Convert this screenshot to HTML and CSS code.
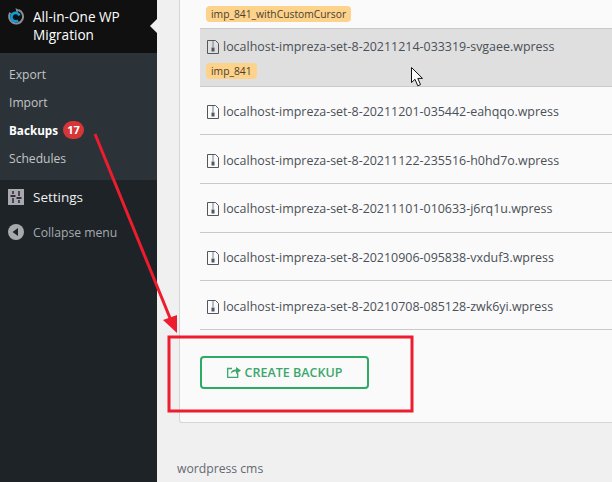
FILE: index.html
```html
<!DOCTYPE html>
<html lang="en">
<head>
  <meta charset="UTF-8" />
  <title>Backups</title>
  <link rel="stylesheet" href="styles.css">
</head>
<body>
  <!-- Sidebar -->
  <nav class="sidebar">
    <div class="plugin-head">
      <svg class="plugin-logo" width="18" height="18" viewBox="0 0 18 18">
        <path d="M11.5 2 A7 7 0 1 1 3.3 4.6" fill="none" stroke="#8c8f94" stroke-width="2"/>
        <path d="M8.5 0 L12.5 2.2 L9.5 4.5 Z" fill="#8c8f94"/>
        <path d="M12.5 7.5 A4.2 4.2 0 1 0 11 12.5" fill="none" stroke="#0a9fdc" stroke-width="2.6"/>
      </svg>
      <span class="plugin-name">All-in-One WP Migration</span>
      <span class="head-notch"></span>
    </div>
    <ul class="submenu">
      <li>Export</li>
      <li>Import</li>
      <li class="current">Backups <span class="count">17</span></li>
      <li>Schedules</li>
    </ul>
    <div class="menu-item">
      <svg class="menu-icon" width="16" height="16" viewBox="0 0 16 16">
        <rect width="16" height="16" fill="#a7aaad"/>
        <path d="M5 2v3M5 9v5M11 2v5M11 11v3" stroke="#3a2a44" stroke-width="1.6"/>
        <path d="M2.5 6h5v2h-5zM8.5 8h5v2h-5z" fill="#3a2a44"/>
      </svg>
      <span>Settings</span>
    </div>
    <div class="menu-item collapse">
      <svg class="menu-icon" width="16" height="16" viewBox="0 0 16 16">
        <circle cx="8" cy="8" r="8" fill="#a7aaad"/>
        <path d="M10 4v8L4.5 8z" fill="#1d2327"/>
      </svg>
      <span>Collapse menu</span>
    </div>
  </nav>

  <!-- Main -->
  <main class="main">
    <div class="card">
      <div class="row first">
        <span class="tag">imp_841_withCustomCursor</span>
      </div>
      <div class="row hover">
        <div class="file">
          <svg class="file-icon" width="12" height="14" viewBox="0 0 12 14"><path d="M.5.5h8l3 3v10H.5z" fill="none" stroke="#50575e"/><path d="M5 2h2M5 4h2M5 6h2" stroke="#7a7f85"/><rect x="4.5" y="7.5" width="3" height="4" fill="#50575e"/></svg>
          localhost-impreza-set-8-20211214-033319-svgaee.wpress
        </div>
        <span class="tag">imp_841</span>
      </div>
      <div class="row">
        <div class="file">
          <svg class="file-icon" width="12" height="14" viewBox="0 0 12 14"><path d="M.5.5h8l3 3v10H.5z" fill="none" stroke="#50575e"/><path d="M5 2h2M5 4h2M5 6h2" stroke="#7a7f85"/><rect x="4.5" y="7.5" width="3" height="4" fill="#50575e"/></svg>
          localhost-impreza-set-8-20211201-035442-eahqqo.wpress
        </div>
      </div>
      <div class="row">
        <div class="file">
          <svg class="file-icon" width="12" height="14" viewBox="0 0 12 14"><path d="M.5.5h8l3 3v10H.5z" fill="none" stroke="#50575e"/><path d="M5 2h2M5 4h2M5 6h2" stroke="#7a7f85"/><rect x="4.5" y="7.5" width="3" height="4" fill="#50575e"/></svg>
          localhost-impreza-set-8-20211122-235516-h0hd7o.wpress
        </div>
      </div>
      <div class="row">
        <div class="file">
          <svg class="file-icon" width="12" height="14" viewBox="0 0 12 14"><path d="M.5.5h8l3 3v10H.5z" fill="none" stroke="#50575e"/><path d="M5 2h2M5 4h2M5 6h2" stroke="#7a7f85"/><rect x="4.5" y="7.5" width="3" height="4" fill="#50575e"/></svg>
          localhost-impreza-set-8-20211101-010633-j6rq1u.wpress
        </div>
      </div>
      <div class="row">
        <div class="file">
          <svg class="file-icon" width="12" height="14" viewBox="0 0 12 14"><path d="M.5.5h8l3 3v10H.5z" fill="none" stroke="#50575e"/><path d="M5 2h2M5 4h2M5 6h2" stroke="#7a7f85"/><rect x="4.5" y="7.5" width="3" height="4" fill="#50575e"/></svg>
          localhost-impreza-set-8-20210906-095838-vxduf3.wpress
        </div>
      </div>
      <div class="row">
        <div class="file">
          <svg class="file-icon" width="12" height="14" viewBox="0 0 12 14"><path d="M.5.5h8l3 3v10H.5z" fill="none" stroke="#50575e"/><path d="M5 2h2M5 4h2M5 6h2" stroke="#7a7f85"/><rect x="4.5" y="7.5" width="3" height="4" fill="#50575e"/></svg>
          localhost-impreza-set-8-20210708-085128-zwk6yi.wpress
        </div>
      </div>
      <button class="create-btn">
        <svg width="14" height="12" viewBox="0 0 14 12"><path d="M5 2.5H.7v8.8h10V7" fill="none" stroke="#3aa76d" stroke-width="1.3"/><path d="M3.5 8C4 5 6 3.6 9 3.6V1L14 4.6 9 8V5.6C7 5.6 5 6 3.5 8z" fill="#3aa76d"/></svg>
        CREATE BACKUP
      </button>
    </div>
    <p class="footer-note">wordpress cms</p>
  </main>

  <!-- Annotation drawn over the screenshot -->
  <svg class="annotation" width="612" height="482" viewBox="0 0 612 482">
    <rect x="169" y="337" width="243" height="74" fill="none" stroke="#ed1c2e" stroke-width="3"/>
    <path d="M95 134 L170 318" stroke="#ed1c2e" stroke-width="3" fill="none"/>
    <path d="M177 333 L163 320 L177 315 Z" fill="#ed1c2e"/>
  </svg>

  <!-- Mouse pointer -->
  <svg class="pointer" width="14" height="20" viewBox="0 0 14 20">
    <path d="M.5.5 V15.5 L4 12.3 L6.8 18.8 L9.5 17.6 L6.8 11.4 H11.5 Z" fill="#fff" stroke="#111" stroke-width="1"/>
  </svg>
</body>
</html>
```

FILE: styles.css
```css
:root {
  --side-dark: #1d2327;
  --side-sub: #2c3338;
  --head-black: #101010;
  --text-main: #4a5057;
  --line: #c9c9c9;
  --tag: #fdd28a;
  --green: #2bab63;
}

* {
  box-sizing: border-box;
}

html, body {
  height: 100%;
}

body {
  margin: 0;
  display: flex;
  overflow: hidden;
  font-family: "Open Sans", "Noto Sans", Arial, sans-serif;
  font-size: 12.45px;
  background-color: #f0f0f0;
  color: var(--text-main);
}

/* Sidebar */
.sidebar {
  width: 157px;
  flex-shrink: 0;
  background-color: var(--side-dark);
  color: #f0f0f1;
}

.plugin-head {
  position: relative;
  display: flex;
  height: 53px;
  padding: 8px 8px 0 7px;
  background-color: var(--head-black);
  color: white;
  font-size: 13.6px;
  line-height: 18px;
}

.plugin-logo {
  flex-shrink: 0;
  margin-right: 8px;
}

.plugin-name {
  width: 120px;
}

.head-notch {
  position: absolute;
  right: 0;
  top: 19px;
  border: 7px solid transparent;
  border-right-color: #f0f0f0;
  border-left-width: 0;
}

.submenu {
  list-style: none;
  margin: 0;
  padding: 7px 0;
  height: 127px;
  background-color: var(--side-sub);
  color: #c3c4c7;
  font-size: 12.1px;
}

.submenu li {
  display: flex;
  align-items: center;
  height: 28px;
  padding-left: 9px;
}

.submenu .current {
  font-size: 11.7px;
  font-weight: 700;
  color: white;
}

.count {
  margin-left: 5px;
  min-width: 21px;
  height: 18px;
  border-radius: 9px;
  background-color: #d63638;
  color: white;
  font-size: 11px;
  line-height: 18px;
  text-align: center;
}

.menu-item {
  display: flex;
  align-items: center;
  gap: 9px;
  height: 34px;
  padding-left: 8px;
  font-size: 13.5px;
}

.collapse {
  padding-top: 2px;
  color: #a7aaad;
  font-size: 12.2px;
}

/* Main */
.main {
  flex: 1;
  min-width: 0;
  padding-left: 22px;
}

.card {
  height: 423px;
  padding: 0 0 0 20px;
  background-color: #fafafa;
  border: 1px solid #d5d5d5;
  border-top: 0;
  border-right: 0;
  border-bottom-left-radius: 3px;
}

.row {
  padding: 17.5px 0 0 7px;
  height: 48.7px;
  border-bottom: 1px solid var(--line);
  background-color: #fafafa;
}

.row.first {
  height: 29px;
  padding: 6px 0 0 6px;
}

.row.hover {
  height: 57.5px;
  padding-top: 10px;
  background-color: #dfdfdf;
}

.file {
  display: flex;
  align-items: center;
  gap: 4px;
  line-height: 16px;
  white-space: nowrap;
}

.file-icon {
  flex-shrink: 0;
}

.tag {
  display: inline-block;
  height: 16px;
  padding: 0 5px;
  border-radius: 4px;
  background-color: var(--tag);
  color: #4a4030;
  font-size: 10.3px;
  line-height: 16px;
  vertical-align: top;
}

.row.hover .tag {
  margin: 8px 0 0 -1px;
}

.create-btn {
  display: flex;
  align-items: center;
  justify-content: center;
  gap: 4px;
  width: 169px;
  height: 33px;
  margin-top: 26px;
  border: 2px solid var(--green);
  border-radius: 4px;
  background-color: #fafafa;
  color: #3aa76d;
  font-family: inherit;
  font-size: 12.5px;
  font-weight: 600;
}

.footer-note {
  margin: 37px 0 0 -2px;
  color: #646970;
  font-size: 12.2px;
}

/* Overlays */
.annotation {
  position: absolute;
  left: 0;
  top: 0;
}

.pointer {
  position: absolute;
  left: 411px;
  top: 67px;
}
```
